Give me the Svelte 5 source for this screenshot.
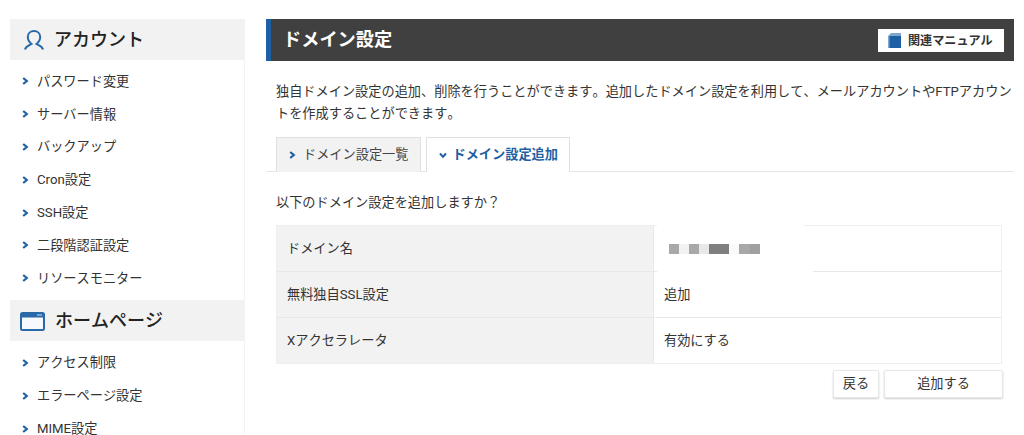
<script lang="ts">
	const accountItems = ['パスワード変更', 'サーバー情報', 'バックアップ', 'Cron設定', 'SSH設定', '二段階認証設定', 'リソースモニター'];
	const homeItems = ['アクセス制限', 'エラーページ設定', 'MIME設定'];
	const blocks = [
		['#a8a8a8', 10], ['#f2f2f2', 10], ['#a8a8a8', 10], ['#e8e8e8', 10],
		['#7f7f7f', 20], ['#fafafa', 10], ['#a8a8a8', 11], ['#a0a0a0', 10]
	];
</script>

{#snippet chevron()}
	<svg class="chev" width="7" height="8" viewBox="0 0 7 8"><path d="M1.2 1 L4.8 4 L1.2 7" fill="none" stroke="#1f5fa3" stroke-width="2.200"/></svg>
{/snippet}

<div class="page">
	<aside class="side">
		<h2 class="side-head">
			<svg width="22" height="22" viewBox="0 0 22 22"><path d="M2 20.500 C2.500 17.500 6 16.500 8.500 15 C6 13 4.800 10.500 4.800 8 C4.800 4.500 7.500 2 11 2 C14.500 2 17.200 4.500 17.200 8 C17.200 10.500 16 13 13.500 15 C16 16.500 19.500 17.500 20 20.500" fill="none" stroke="#2a69a8" stroke-width="2"/></svg>
			<span>アカウント</span>
		</h2>
		<ul class="side-list">
			{#each accountItems as item}
				<li>{@render chevron()}{item}</li>
			{/each}
		</ul>
		<h2 class="side-head home">
			<svg width="25" height="21" viewBox="0 0 25 21"><rect x="1" y="3" width="23" height="17" rx="1.500" fill="#f7fafd" stroke="#2a69a8" stroke-width="2"/><rect x="1" y="3" width="23" height="4.500" fill="#2a69a8"/><rect x="17" y="4.200" width="5" height="1.600" fill="#8fb4d6"/></svg>
			<span>ホームページ</span>
		</h2>
		<ul class="side-list second">
			{#each homeItems as item}
				<li>{@render chevron()}{item}</li>
			{/each}
		</ul>
	</aside>

	<main class="main">
		<header class="title">
			<h1>ドメイン設定</h1>
			<div class="manual">
				<svg width="13" height="15" viewBox="0 0 13 15"><path d="M0 3 L3 0 H13 V15 H0 Z" fill="#7fa8cc"/><rect x="1.500" y="3" width="11.500" height="12" fill="#1f5fa3"/></svg>
				<span>関連マニュアル</span>
			</div>
		</header>

		<p class="lead">独自ドメイン設定の追加、削除を行うことができます。追加したドメイン設定を利用して、メールアカウントやFTPアカウントを作成することができます。</p>

		<div class="tabs">
			<div class="tab">{@render chevron()}<span>ドメイン設定一覧</span></div>
			<div class="tab active">
				<svg class="chev" width="8" height="7" viewBox="0 0 8 7"><path d="M1 1.500 L4 4.800 L7 1.500" fill="none" stroke="#1f5fa3" stroke-width="2"/></svg>
				<span>ドメイン設定追加</span>
			</div>
		</div>

		<p class="confirm">以下のドメイン設定を追加しますか？</p>

		<div class="table">
			<div class="row">
				<div class="th">ドメイン名</div>
				<div class="td masked">
					<div class="blocks">
						{#each blocks as [color, width]}
							<i style:background={color} style:width="{width}px"></i>
						{/each}
					</div>
				</div>
			</div>
			<div class="row">
				<div class="th">無料独自SSL設定</div>
				<div class="td">追加</div>
			</div>
			<div class="row">
				<div class="th">Xアクセラレータ</div>
				<div class="td">有効にする</div>
			</div>
		</div>

		<div class="actions">
			<button class="btn back">戻る</button>
			<button class="btn add">追加する</button>
		</div>
	</main>
</div>

<style>
	:global(body) {
		margin: 0;
		background: #fff;
	}

	.page {
		display: flex;
		height: 435px;
		overflow: hidden;
		padding: 19px 0 0 10px;
		box-sizing: border-box;
		gap: 21px;
		font-family: Roboto, "Noto Sans CJK JP", sans-serif;
		font-size: 13.2px;
		font-kerning: none;
		color: #333;
	}

	/* sidebar */
	.side {
		width: 235px;
		flex: none;
		border-right: 1px solid #f2f2f2;
		box-sizing: border-box;
	}

	.side-head {
		display: flex;
		align-items: center;
		gap: 9px;
		height: 41px;
		margin: 0;
		padding-left: 13px;
		background: #f2f2f2;
		font-size: 18px;
		font-weight: 500;
		color: #222;
	}

	.side-head span {
		padding-bottom: 3px;
	}

	.side-head.home {
		padding-left: 10px;
		gap: 10px;
	}

	.side-list {
		list-style: none;
		margin: 0;
		padding: 5px 0;
	}

	.side-list.second {
		padding-top: 6px;
	}

	.side-list li {
		display: flex;
		align-items: center;
		height: 32.8px;
		padding-left: 12px;
		gap: 8px;
		line-height: 1;
	}

	.chev {
		flex: none;
	}

	/* main */
	.main {
		width: 748px;
		flex: none;
	}

	.title {
		display: flex;
		align-items: center;
		justify-content: space-between;
		height: 42px;
		box-sizing: border-box;
		background: #404040;
		border-left: 5px solid #1f5fa3;
		padding: 0 10px 0 12px;
	}

	.title h1 {
		margin: 0;
		padding-bottom: 4px;
		font-size: 18.200px;
		font-weight: 700;
		color: #fff;
	}

	.manual {
		display: flex;
		align-items: center;
		gap: 7px;
		height: 23px;
		width: 126px;
		box-sizing: border-box;
		padding-left: 10px;
		background: #fff;
		font-size: 12.100px;
		font-weight: 700;
		color: #333;
	}

	.manual span {
		padding-bottom: 2px;
	}

	.lead {
		margin: 20px 0 0;
		padding-left: 10px;
		line-height: 22px;
		color: #333;
	}

	.tabs {
		display: flex;
		gap: 5px;
		margin-top: 12px;
		padding-left: 10px;
		height: 35px;
		box-sizing: border-box;
		border-bottom: 1px solid #e6e6e6;
	}

	.tab {
		display: flex;
		align-items: center;
		gap: 7px;
		height: 35px;
		box-sizing: border-box;
		padding: 0 11px 0 12px;
		background: #f2f2f2;
		border: 1px solid #e0e0e0;
		border-bottom: none;
		color: #444;
	}

	.tab span {
		padding-bottom: 3px;
	}

	.tab.active {
		gap: 6px;
		background: #fff;
		font-weight: 700;
		color: #1f5fa3;
	}

	.confirm {
		margin: 21px 0 0;
		padding-left: 10px;
		line-height: 20px;
	}

	.table {
		margin: 12px 0 0 10px;
		width: 726px;
		border: 1px solid #eee;
		box-sizing: border-box;
	}

	.row {
		display: flex;
		height: 46px;
		border-top: 1px solid #e8e8e8;
		box-sizing: border-box;
	}

	.row:first-child {
		border-top: none;
		height: 45px;
	}

	.th {
		display: flex;
		align-items: center;
		width: 377px;
		flex: none;
		box-sizing: border-box;
		padding: 0 0 2px 10px;
		background: #f2f2f2;
		border-right: 1px solid #e8e8e8;
	}

	.td {
		display: flex;
		align-items: center;
		padding: 0 0 2px 10px;
	}

	.masked {
		position: relative;
		padding-bottom: 0;
	}

	/* white smudge that hides the domain, it sits over the cell borders */
	.masked::before {
		content: '';
		position: absolute;
		left: 3px;
		top: -1px;
		width: 156px;
		height: 47px;
		background: #fff;
		clip-path: polygon(0 0, 94% 0, 100% 100%, 0 100%);
	}

	.blocks {
		position: relative;
		display: flex;
		height: 10px;
		margin-left: 5px;
	}

	.blocks i {
		display: block;
		height: 10px;
	}

	.actions {
		display: flex;
		justify-content: flex-end;
		gap: 5px;
		width: 737px;
		margin-top: 6px;
	}

	.btn {
		height: 28px;
		box-sizing: border-box;
		font: inherit;
		color: #333;
		background: #fff;
		border: 1px solid #e8e8e8;
		border-radius: 2px;
		box-shadow: 0 1px 2px rgba(0, 0, 0, 0.2);
		padding: 0 0 4px;
	}

	.back {
		width: 46px;
	}

	.add {
		width: 119px;
	}
</style>
